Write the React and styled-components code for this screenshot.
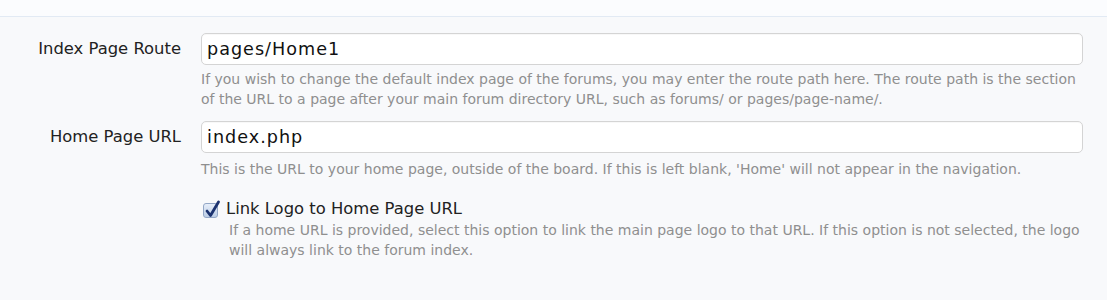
import React from "react";
import styled, { createGlobalStyle } from "styled-components";

const Global = createGlobalStyle`
  html, body { margin: 0; padding: 0; background: #f8f9fb; }
  body { font-family: "DejaVu Sans", Verdana, sans-serif; }
`;

const Page = styled.div`
  width: 1107px;
  height: 300px;
  background: #f8f9fb;
  overflow: hidden;
`;

const TopBand = styled.div`
  height: 16px;
  background: #fbfcfe;
  border-bottom: 1px solid #e2eaf4;
`;

const Form = styled.div`
  display: flex;
  flex-direction: column;
  padding-top: 16px;
`;

const Row = styled.div`
  display: grid;
  grid-template-columns: 181px 882px;
  column-gap: 20px;
  margin-bottom: ${(p) => p.$gap || 0}px;
`;

const Label = styled.label`
  text-align: right;
  font-size: 16.4px;
  color: #222;
  line-height: 32px;
`;

const Field = styled.div`
  display: flex;
  flex-direction: column;
`;

const Input = styled.input`
  box-sizing: border-box;
  width: 882px;
  height: 32px;
  border: 1px solid #d4d4d4;
  border-radius: 5px;
  background: #fff;
  padding: 0 5px;
  font-family: inherit;
  font-size: 17.6px;
  letter-spacing: 1px;
  color: #111;
  outline: none;
  box-shadow: inset 0 1px 1px rgba(0, 0, 0, 0.03);
`;

const Explain = styled.p`
  margin: ${(p) => p.$top ?? 4}px 0 0 ${(p) => p.$indent || 0}px;
  font-size: 14px;
  line-height: 20px;
  color: #8f8f8f;
`;

const CheckLabel = styled.label`
  display: flex;
  align-items: center;
  gap: 8px;
  font-size: 16.4px;
  color: #222;
  line-height: 20px;
  margin-left: 2px;
`;

const Box = styled.span`
  width: 15px;
  height: 15px;
  box-sizing: border-box;
  border: 1px solid #93a7c6;
  border-radius: 3px;
  background: linear-gradient(#e6eef9, #bccde6);
  position: relative;
  flex: none;
  margin-top: 2px;
`;

const Tick = styled.svg`
  position: absolute;
  left: 0px;
  top: -5px;
`;

export default function App() {
  return (
    <Page>
      <Global />
      <TopBand />
      <Form>
        <Row $gap={12}>
          <Label>Index Page Route</Label>
          <Field>
            <Input defaultValue="pages/Home1" />
            <Explain>
              If you wish to change the default index page of the forums, you may enter the route path here. The route path is the section of the URL to a page after your main forum directory URL, such as forums/ or pages/page-name/.
            </Explain>
          </Field>
        </Row>
        <Row $gap={20}>
          <Label>Home Page URL</Label>
          <Field>
            <Input defaultValue="index.php" />
            <Explain $top={6}>
              This is the URL to your home page, outside of the board. If this is left blank, 'Home' will not appear in the navigation.
            </Explain>
          </Field>
        </Row>
        <Row>
          <span />
          <Field>
            <CheckLabel>
              <Box>
                <Tick width="18" height="20" viewBox="0 0 18 20">
                  <path d="M3 12 L6.5 16.5 L14.5 3" fill="none" stroke="#1b326f" strokeWidth="2.8" strokeLinecap="round" strokeLinejoin="round" />
                </Tick>
              </Box>
              Link Logo to Home Page URL
            </CheckLabel>
            <Explain $top={1} $indent={28}>
              If a home URL is provided, select this option to link the main page logo to that URL. If this option is not selected, the logo will always link to the forum index.
            </Explain>
          </Field>
        </Row>
      </Form>
    </Page>
  );
}
